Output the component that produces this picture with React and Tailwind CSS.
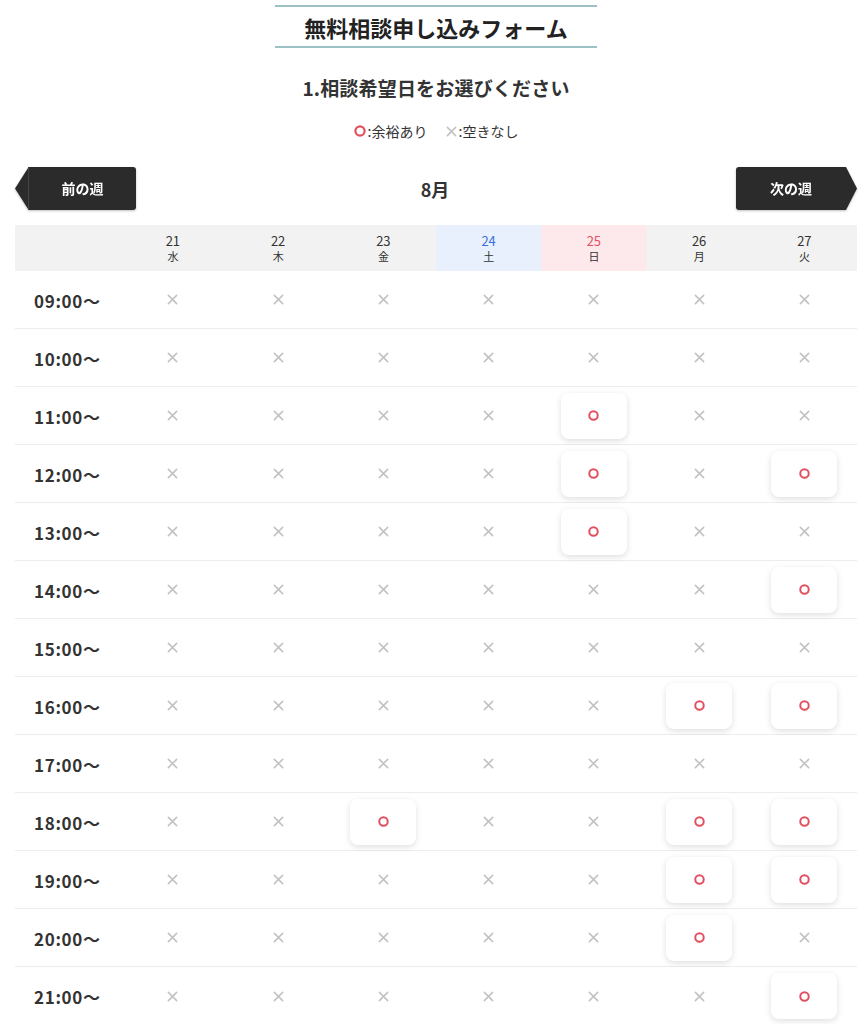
import React from "react";

const days = [
  { d: "21", w: "水", t: "" },
  { d: "22", w: "木", t: "" },
  { d: "23", w: "金", t: "" },
  { d: "24", w: "土", t: "sat" },
  { d: "25", w: "日", t: "sun" },
  { d: "26", w: "月", t: "" },
  { d: "27", w: "火", t: "" },
];

const times = [
  "09:00", "10:00", "11:00", "12:00", "13:00", "14:00", "15:00",
  "16:00", "17:00", "18:00", "19:00", "20:00", "21:00",
];

const avail = {
  "11:00": [4],
  "12:00": [4, 6],
  "13:00": [4],
  "14:00": [6],
  "16:00": [5, 6],
  "18:00": [2, 5, 6],
  "19:00": [5, 6],
  "20:00": [5],
  "21:00": [6],
};

function Circle({ size = 11 }) {
  return (
    <svg width={size} height={size} viewBox="0 0 12 12">
      <circle cx="6" cy="6" r="4.6" fill="none" stroke="#e2505f" strokeWidth="2.2" />
    </svg>
  );
}

function Cross({ size = 11 }) {
  return (
    <svg width={size} height={size} viewBox="0 0 12 12">
      <path d="M1.5 1.5 L10.5 10.5 M10.5 1.5 L1.5 10.5" stroke="#c2c2c2" strokeWidth="1.7" strokeLinecap="round" />
    </svg>
  );
}

export default function App() {
  return (
    <div
      className="bg-white min-h-screen text-[#333]"
      style={{ fontFamily: '"Noto Sans CJK JP", "Noto Sans", sans-serif' }}
    >
      <div className="ml-[15px] w-[842px] pt-[5px]">
        <div className="flex justify-center">
          <div className="w-[322px] h-[43px] border-y-2 border-[#9cc0c3] flex items-center justify-center">
            <h1 className="text-[22px] font-bold leading-none text-[#222]">
              無料相談申し込みフォーム
            </h1>
          </div>
        </div>

        <h2 className="mt-[30px] text-center text-[19px] font-bold tracking-[0.01em] leading-none text-[#333]">
          1.相談希望日をお選びください
        </h2>

        <div className="mt-[27px] flex justify-center items-center gap-[18px] text-[14px] leading-none text-[#333]">
          <span className="flex items-center gap-[2px]">
            <Circle size={12} />
            <span>:余裕あり</span>
          </span>
          <span className="flex items-center gap-[2px]">
            <Cross size={11} />
            <span>:空きなし</span>
          </span>
        </div>

        <div className="mt-[29px] flex items-center justify-between h-[43px]">
          <div className="flex h-[43px] drop-shadow-[0_1px_1px_rgba(0,0,0,0.25)]">
            <svg width="13" height="43" viewBox="0 0 13 43" className="block">
              <polygon points="13,1 0,21.5 13,42" fill="#2b2b2b" />
            </svg>
            <button className="w-[108px] h-[43px] bg-[#2b2b2b] rounded-r-[3px] border-l border-[#454545] text-white text-[14px] font-bold flex items-center justify-center">
              前の週
            </button>
          </div>
          <div className="text-[18px] font-bold leading-none text-[#333] pr-[2px]">8月</div>
          <div className="flex h-[43px] drop-shadow-[0_1px_1px_rgba(0,0,0,0.25)]">
            <button className="w-[110px] h-[43px] bg-[#2b2b2b] rounded-l-[3px] text-white text-[14px] font-bold flex items-center justify-center">
              次の週
            </button>
            <svg width="11" height="43" viewBox="0 0 11 43" className="block">
              <polygon points="0,0 11,21.5 0,43" fill="#2b2b2b" />
            </svg>
          </div>
        </div>

        <div className="mt-[15px]">
          <div className="grid grid-cols-8 h-[46px] bg-[#f2f2f2]">
            <div />
            {days.map((d) => (
              <div
                key={d.d}
                className={
                  "flex flex-col items-center justify-center " +
                  (d.t === "sat" ? "bg-[#e8f0fe]" : d.t === "sun" ? "bg-[#fde8eb]" : "")
                }
              >
                <span
                  className={
                    "text-[13px] leading-[16px] " +
                    (d.t === "sat" ? "text-[#3a6fd8]" : d.t === "sun" ? "text-[#e2505f]" : "text-[#333]")
                  }
                >
                  {d.d}
                </span>
                <span className="text-[11px] leading-[14px] text-[#333]">{d.w}</span>
              </div>
            ))}
          </div>

          {times.map((t, i) => (
            <div
              key={t}
              className={"grid grid-cols-8 h-[58px] " + (i < times.length - 1 ? "border-b border-[#ececec]" : "")}
            >
              <div className="flex items-center pl-[19px] pt-[2px] text-[17px] font-bold tracking-[0.04em] text-[#333]">
                {t}〜
              </div>
              {days.map((d, j) => {
                const ok = (avail[t] || []).includes(j);
                return (
                  <div key={d.d} className="flex items-center justify-center">
                    {ok ? (
                      <button className="w-[66px] h-[46px] rounded-[8px] bg-white shadow-[0_2px_6px_rgba(0,0,0,0.13)] flex items-center justify-center">
                        <Circle size={11} />
                      </button>
                    ) : (
                      <Cross size={11} />
                    )}
                  </div>
                );
              })}
            </div>
          ))}
        </div>
      </div>
    </div>
  );
}
